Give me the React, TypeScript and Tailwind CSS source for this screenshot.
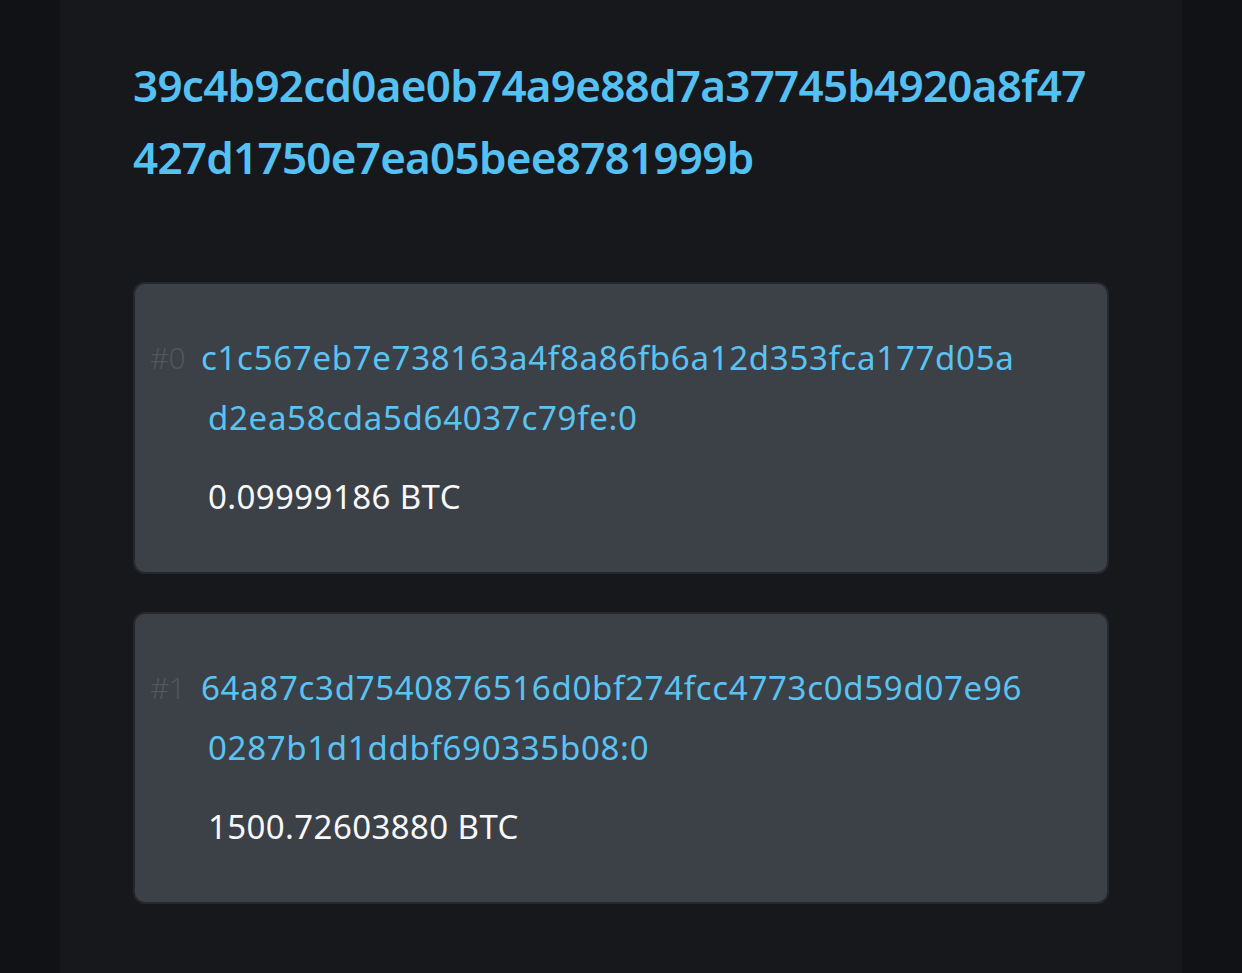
import React from "react";

const font = { fontFamily: '"Noto Sans", "Open Sans", sans-serif' };

function Card({ idx, l1, l2, amount }: { idx: string; l1: string; l2: string; amount: string }) {
  return (
    <div className="rounded-[12px] border-2 border-[#25282d] bg-[#3c4047] pl-[15px] pt-[44px] pb-[45px]">
      <div className="flex">
        <span className="w-[51px] shrink-0 text-[30px] font-light leading-[60px] text-[#52565d] tracking-[-0.8px]">{idx}</span>
        <div className="text-[33px] leading-[60px] text-[#5bc3f2] tracking-[0.7px]">
          <div>{l1}</div>
          <div className="pl-[7px]">{l2}</div>
        </div>
      </div>
      <div className="mt-[19px] pl-[58px] text-[33px] leading-[60px] text-[#f7f8f9] tracking-[0.4px]">{amount}</div>
    </div>
  );
}

export default function App() {
  return (
    <div className="flex min-h-[973px] w-full bg-[#111215]" style={font}>
      <div className="mx-[60px] flex-1 bg-[#17181c] px-[73px] pt-[49px] pb-[68px]">
        <div className="text-[44px] font-semibold leading-[72px] text-[#55c1f3] tracking-[-0.75px]">
          <div>39c4b92cd0ae0b74a9e88d7a37745b4920a8f47</div>
          <div>427d1750e7ea05bee8781999b</div>
        </div>
        <div className="mt-[89px] flex flex-col gap-[38px]">
          <Card
            idx="#0"
            l1="c1c567eb7e738163a4f8a86fb6a12d353fca177d05a"
            l2="d2ea58cda5d64037c79fe:0"
            amount="0.09999186 BTC"
          />
          <Card
            idx="#1"
            l1="64a87c3d7540876516d0bf274fcc4773c0d59d07e96"
            l2="0287b1d1ddbf690335b08:0"
            amount="1500.72603880 BTC"
          />
        </div>
      </div>
    </div>
  );
}
